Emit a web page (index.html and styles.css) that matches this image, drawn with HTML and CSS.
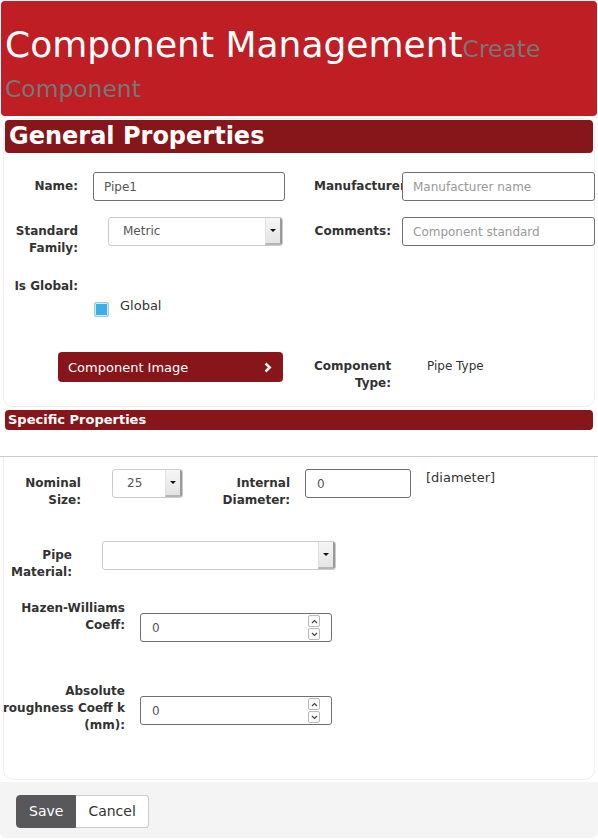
FILE: index.html
```html
<!DOCTYPE html>
<html>

<head>
    <title>Component Management</title>
    <link rel="stylesheet" href="styles.css">
</head>

<body>
    <div class="modal">
        <div class="page-header">
            <h1>Component Management<small>Create Component</small></h1>
        </div>

        <div class="panel general">
            <h2 class="panel-title">General Properties</h2>

            <div class="form-row row-name">
                <label class="field-label">Name:</label>
                <div class="field-control">
                    <input type="text" class="text-input" value="Pipe1">
                </div>
                <label class="field-label right">Manufacturer:</label>
                <div class="field-control">
                    <input type="text" class="text-input wide" placeholder="Manufacturer name">
                </div>
            </div>

            <div class="form-row row-family">
                <label class="field-label">Standard Family:</label>
                <div class="field-control">
                    <div class="select-box family-select">
                        <span class="select-value">Metric</span>
                        <span class="select-arrow"><i class="caret"></i></span>
                    </div>
                </div>
                <label class="field-label right">Comments:</label>
                <div class="field-control">
                    <input type="text" class="text-input wide" placeholder="Component standard">
                </div>
            </div>

            <div class="form-row row-global">
                <label class="field-label">Is Global:</label>
            </div>

            <div class="form-row row-checkbox">
                <span class="field-label empty"></span>
                <div class="field-control">
                    <label class="check">
                        <span class="checkbox"></span>
                        <span class="check-text">Global</span>
                    </label>
                </div>
            </div>

            <div class="form-row row-image">
                <div class="image-cell">
                    <button class="image-btn">
                        <span>Component Image</span>
                        <svg width="8" height="11" viewBox="0 0 8 11">
                            <polyline points="1.5,1.5 5.8,5.5 1.5,9.5" fill="none" stroke="#fff" stroke-width="2.4" />
                        </svg>
                    </button>
                </div>
                <label class="field-label right">Component Type:</label>
                <div class="field-control static-value">Pipe Type</div>
            </div>
        </div>

        <h3 class="section-bar">Specific Properties</h3>
        <div class="tab-line"></div>

        <div class="panel specific">
            <div class="spec-row row-size">
                <label class="spec-label size-label">Nominal Size:</label>
                <div class="select-box size-select">
                    <span class="select-value">25</span>
                    <span class="select-arrow"><i class="caret"></i></span>
                </div>
                <label class="spec-label diameter-label">Internal Diameter:</label>
                <input type="text" class="text-input diameter-input" value="0">
                <span class="unit">[diameter]</span>
            </div>

            <div class="spec-row row-material">
                <label class="spec-label material-label">Pipe Material:</label>
                <div class="select-box material-select">
                    <span class="select-value"></span>
                    <span class="select-arrow"><i class="caret"></i></span>
                </div>
            </div>

            <div class="spec-row row-hazen">
                <label class="spec-label coeff-label">Hazen-Williams Coeff:</label>
                <div class="number-field">
                    <span class="number-value">0</span>
                    <span class="spinner">
                        <span class="spin"><svg width="7" height="5" viewBox="0 0 7 5"><polyline points="1,4 3.5,1.5 6,4" fill="none" stroke="#444" stroke-width="1.1" /></svg></span>
                        <span class="spin"><svg width="7" height="5" viewBox="0 0 7 5"><polyline points="1,1 3.5,3.5 6,1" fill="none" stroke="#444" stroke-width="1.1" /></svg></span>
                    </span>
                </div>
            </div>

            <div class="spec-row row-rough">
                <label class="spec-label coeff-label">Absolute roughness Coeff k (mm):</label>
                <div class="number-field">
                    <span class="number-value">0</span>
                    <span class="spinner">
                        <span class="spin"><svg width="7" height="5" viewBox="0 0 7 5"><polyline points="1,4 3.5,1.5 6,4" fill="none" stroke="#444" stroke-width="1.1" /></svg></span>
                        <span class="spin"><svg width="7" height="5" viewBox="0 0 7 5"><polyline points="1,1 3.5,3.5 6,1" fill="none" stroke="#444" stroke-width="1.1" /></svg></span>
                    </span>
                </div>
            </div>
        </div>

        <div class="modal-footer">
            <div class="btn-group">
                <button class="btn btn-save">Save</button>
                <button class="btn btn-cancel">Cancel</button>
            </div>
        </div>
    </div>
</body>

</html>
```

FILE: styles.css
```css
body {
    margin: 0;
    padding: 0;
    background-color: #fff;
    font-family: "DejaVu Sans", Verdana, sans-serif;
    color: #333;
}

.modal {
    width: 598px;
}

/* header */

.page-header {
    margin: 1px;
    padding: 24px 4px 11px;
    background-color: #be1e24;
    border-radius: 4px;
}

.page-header h1 {
    margin: 0;
    font-size: 36px;
    line-height: 40px;
    font-weight: normal;
    color: #fff;
}

.page-header small {
    font-size: 65%;
    line-height: 1;
    color: #777;
}

/* panels */

.panel {
    margin: 1px 3px 0;
    border: 1px solid #eee;
    border-radius: 10px;
    background-color: #fff;
}

.panel.general {
    margin-top: 2px;
    padding: 1px 1px 14px;
}

.panel-title {
    margin: 0;
    height: 33px;
    padding-left: 4px;
    background-color: #87161a;
    border-radius: 4px;
    color: #fff;
    font-size: 24px;
    line-height: 33px;
    font-weight: bold;
}

.form-row {
    display: flex;
    align-items: flex-start;
}

.row-name {
    margin-top: 19px;
}

.row-family {
    margin-top: 16px;
}

.row-global {
    margin-top: 15px;
}

.row-checkbox {
    margin-top: 2px;
}

.row-image {
    margin-top: 35px;
}

.field-label {
    flex: none;
    width: 73px;
    padding: 6px 15px 0 0;
    text-align: right;
    font-size: 12px;
    line-height: 17px;
    font-weight: bold;
    color: #333;
}

.field-label.right {
    width: 77px;
    padding-right: 11px;
}

.field-label.empty {
    padding-top: 0;
}

.field-control {
    flex: none;
    width: 221px;
}

.field-control:last-child {
    width: auto;
    flex: 1;
}

.text-input {
    box-sizing: border-box;
    display: block;
    width: 192px;
    height: 29px;
    margin: 0;
    padding: 0 10px;
    border: 1px solid #6f6f6f;
    border-radius: 3px;
    background-color: #fff;
    font-family: inherit;
    font-size: 12px;
    color: #555;
}

.text-input.wide {
    width: 193px;
}

.text-input::placeholder {
    color: #999;
}

/* fake select */

.select-box {
    box-sizing: border-box;
    display: flex;
    height: 29px;
    border: 1px solid #ccc;
    border-radius: 3px;
    background-color: #fff;
    font-size: 12px;
    color: #555;
}

.select-value {
    flex: 1;
    padding-left: 14px;
    line-height: 27px;
}

.select-arrow {
    display: flex;
    align-items: center;
    justify-content: center;
    width: 14px;
    background: linear-gradient(#f6f6f6, #e4e4e4);
    border-left: 1px solid #e0e0e0;
    border-right: 2px solid #9a9a9a;
    border-bottom: 2px solid #b5b5b5;
    border-radius: 0 2px 2px 0;
}

.caret {
    width: 0;
    height: 0;
    border-left: 3px solid transparent;
    border-right: 3px solid transparent;
    border-top: 3px solid #111;
}

.family-select {
    width: 175px;
    margin-left: 15px;
}

/* checkbox */

.check {
    display: flex;
    align-items: flex-start;
    margin-left: 1px;
}

.checkbox {
    box-sizing: border-box;
    width: 15px;
    height: 15px;
    margin-top: 5px;
    border: 1px solid #93ccec;
    border-radius: 2px;
    background-color: #3daee9;
    box-shadow: inset 0 0 0 1px #d6edf9;
}

.check-text {
    margin-left: 11px;
    font-size: 13px;
    line-height: 18px;
    color: #333;
}

/* image button */

.image-cell {
    flex: none;
    width: 309px;
}

.image-btn {
    display: flex;
    align-items: center;
    justify-content: space-between;
    width: 225px;
    height: 30px;
    margin-left: 53px;
    padding: 0 11px 0 10px;
    border: none;
    border-radius: 4px;
    background-color: #87161a;
    color: #fff;
    font-family: inherit;
    font-size: 13px;
    cursor: pointer;
}

.static-value {
    padding: 6px 0 0 25px;
    font-size: 12px;
    line-height: 17px;
    color: #333;
}

/* specific properties */

.section-bar {
    margin: 3px 5px 0;
    height: 20px;
    padding-left: 3px;
    background-color: #87161a;
    border-radius: 4px;
    color: #fff;
    font-size: 13px;
    line-height: 20px;
    font-weight: bold;
}

.tab-line {
    height: 26px;
    border-bottom: 1px solid #cacaca;
}

.panel.specific {
    margin-top: 0;
    border-top: none;
    border-radius: 0 0 10px 10px;
    padding: 12px 0 45px;
}

.spec-row {
    display: flex;
    align-items: flex-start;
}

.spec-label {
    flex: none;
    padding-top: 6px;
    text-align: right;
    font-size: 12px;
    line-height: 17px;
    font-weight: bold;
    color: #333;
}

.size-label {
    width: 77px;
    margin-right: 31px;
}

.size-select {
    width: 71px;
}

.size-select .select-value {
    padding-left: 14px;
}

.diameter-label {
    width: 92px;
    margin: 0 15px;
}

.text-input.diameter-input {
    width: 106px;
    padding-left: 11px;
}

.unit {
    margin-left: 15px;
    font-size: 13px;
    line-height: 18px;
    color: #333;
}

.row-material {
    margin-top: 32px;
}

.material-label {
    width: 68px;
    margin-right: 30px;
}

.material-select {
    width: 234px;
}

.row-hazen {
    margin-top: 19px;
}

.row-rough {
    margin-top: 41px;
}

.coeff-label {
    width: 123px;
    margin: 0 15px 0 -2px;
    padding-top: 0;
}

.number-field {
    box-sizing: border-box;
    display: flex;
    align-items: center;
    width: 192px;
    height: 29px;
    margin-top: 13px;
    padding: 0 11px 0 11px;
    border: 1px solid #6f6f6f;
    border-radius: 3px;
    font-size: 12px;
    color: #555;
}

.spinner {
    display: flex;
    flex-direction: column;
    gap: 1px;
    margin-left: auto;
}

.spin {
    display: flex;
    align-items: center;
    justify-content: center;
    box-sizing: border-box;
    width: 12px;
    height: 12px;
    border: 1px solid #bbb;
    border-radius: 2px;
    background-color: #fafafa;
}

/* footer */

.modal-footer {
    margin-top: 2px;
    padding: 13px 16px 10px;
    background-color: #f4f4f4;
    border-radius: 0 0 6px 6px;
}

.btn-group {
    display: flex;
}

.btn {
    padding: 6px 12px;
    font-family: inherit;
    font-size: 14px;
    line-height: 19px;
    cursor: pointer;
}

.btn-save {
    border: 1px solid #58585a;
    border-radius: 4px 0 0 4px;
    background-color: #58585a;
    color: #fff;
}

.btn-cancel {
    border: 1px solid #ccc;
    border-left: none;
    border-radius: 0 4px 4px 0;
    background-color: #fff;
    color: #333;
}
```
